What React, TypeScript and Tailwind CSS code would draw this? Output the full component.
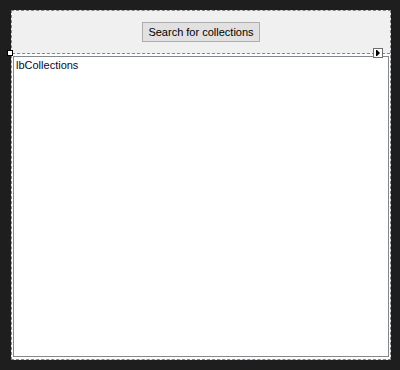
export default function App() {
  return (
    <div className="relative w-[400px] h-[370px] bg-[#1e1e1e] overflow-hidden" style={{ fontFamily: '"Liberation Sans", Arial, sans-serif' }}>
      <div className="absolute left-[11px] top-[10px] w-[380px] h-[350px] border border-dashed border-[#858585] bg-[#f0f0f0] flex flex-col">
        <div className="h-[43px] border-b border-dashed border-[#858585] flex items-center justify-center">
          <button
            type="button"
            className="h-[20px] w-[118px] border border-[#adadad] bg-[#e1e1e1] text-[11px] leading-none text-black"
          >
            Search for collections
          </button>
        </div>
        <div className="flex-1 bg-white pt-[2px] pb-[2px] px-[1px] flex">
          <div className="flex-1 border border-[#828790] bg-white px-[2px] pt-[3px]">
            <p className="text-[11px] leading-none text-[#0a0a2a]">lbCollections</p>
          </div>
        </div>
      </div>

      {/* selection handle */}
      <div className="absolute left-[7px] top-[50px] w-[6px] h-[6px] border border-black bg-white" />

      {/* smart tag glyph */}
      <div className="absolute left-[373px] top-[48px] w-[10px] h-[10px] border border-[#6e6e6e] bg-white">
        <svg width="8" height="8" viewBox="0 0 8 8" className="block">
          <rect x="2" y="1" width="1" height="6" fill="#000" />
          <path d="M3 1 L6 4 L3 7 Z" fill="#000" />
        </svg>
      </div>
    </div>
  );
}
